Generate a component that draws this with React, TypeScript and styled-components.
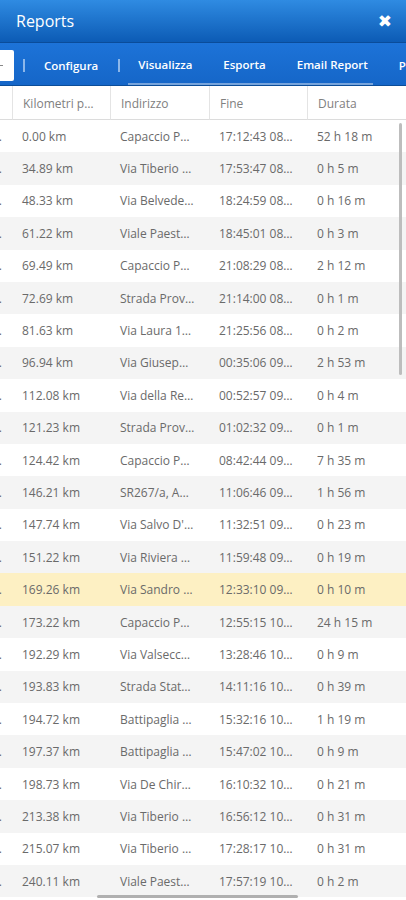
import React from 'react';
import styled, { createGlobalStyle } from 'styled-components';

/**
 * righe del report: km, indirizzo, fine, durata
 */
const rows: [string, string, string, string][] = [
  ['0.00 km', 'Capaccio P…', '17:12:43 08…', '52 h 18 m'],
  ['34.89 km', 'Via Tiberio …', '17:53:47 08…', '0 h 5 m'],
  ['48.33 km', 'Via Belvede…', '18:24:59 08…', '0 h 16 m'],
  ['61.22 km', 'Viale Paest…', '18:45:01 08…', '0 h 3 m'],
  ['69.49 km', 'Capaccio P…', '21:08:29 08…', '2 h 12 m'],
  ['72.69 km', 'Strada Prov…', '21:14:00 08…', '0 h 1 m'],
  ['81.63 km', 'Via Laura 1…', '21:25:56 08…', '0 h 2 m'],
  ['96.94 km', 'Via Giusep…', '00:35:06 09…', '2 h 53 m'],
  ['112.08 km', 'Via della Re…', '00:52:57 09…', '0 h 4 m'],
  ['121.23 km', 'Strada Prov…', '01:02:32 09…', '0 h 1 m'],
  ['124.42 km', 'Capaccio P…', '08:42:44 09…', '7 h 35 m'],
  ['146.21 km', 'SR267/a, A…', '11:06:46 09…', '1 h 56 m'],
  ['147.74 km', "Via Salvo D'…", '11:32:51 09…', '0 h 23 m'],
  ['151.22 km', 'Via Riviera …', '11:59:48 09…', '0 h 19 m'],
  ['169.26 km', 'Via Sandro …', '12:33:10 09…', '0 h 10 m'],
  ['173.22 km', 'Capaccio P…', '12:55:15 10…', '24 h 15 m'],
  ['192.29 km', 'Via Valsecc…', '13:28:46 10…', '0 h 9 m'],
  ['193.83 km', 'Strada Stat…', '14:11:16 10…', '0 h 39 m'],
  ['194.72 km', 'Battipaglia …', '15:32:16 10…', '1 h 19 m'],
  ['197.37 km', 'Battipaglia …', '15:47:02 10…', '0 h 9 m'],
  ['198.73 km', 'Via De Chir…', '16:10:32 10…', '0 h 21 m'],
  ['213.38 km', 'Via Tiberio …', '16:56:12 10…', '0 h 31 m'],
  ['215.07 km', 'Via Tiberio …', '17:28:17 10…', '0 h 31 m'],
  ['240.11 km', 'Viale Paest…', '17:57:19 10…', '0 h 2 m'],
];

const SELECTED = 14;

const Global = createGlobalStyle`
  html, body {
    margin: 0;
    padding: 0;
    background: #fff;
    overflow: hidden;
  }
  body {
    font-family: 'Open Sans', 'Liberation Sans', sans-serif;
  }
`;

const Screen = styled.div`
  position: relative;
  width: 406px;
  height: 900px;
  overflow: hidden;
  background: #fff;
`;

const TitleBar = styled.div`
  height: 42px;
  display: flex;
  align-items: center;
  justify-content: space-between;
  padding: 0 16px;
  background: linear-gradient(#2f8be2, #0c5bb5);
  color: #fff;
`;

const Title = styled.span`
  font-size: 16px;
`;

const Close = styled.span`
  font-size: 17px;
  font-weight: 700;
  font-family: 'DejaVu Sans', sans-serif;
  margin-right: -2px;
`;

const Toolbar = styled.div`
  height: 44px;
  display: flex;
  align-items: center;
  padding-top: 3px;
  background: linear-gradient(#1d73d8, #1566c8);
  border-top: 1px solid #0a4c9a;
  border-bottom: 1px solid #0b4d99;
  box-sizing: border-box;
  white-space: nowrap;
`;

const Search = styled.div`
  width: 14px;
  height: 31px;
  background: #fff;
  border-radius: 0 2px 2px 0;
  flex-shrink: 0;
  position: relative;
  &::after {
    content: '';
    position: absolute;
    left: 0;
    top: 15px;
    width: 3px;
    height: 1px;
    background: #888;
  }
`;

const Sep = styled.span<{ $left: number; $right: number }>`
  width: 2px;
  height: 13px;
  background: rgba(190, 215, 245, 0.7);
  margin: 0 ${(p) => p.$right}px 0 ${(p) => p.$left}px;
  flex-shrink: 0;
`;

const Link = styled.span`
  font-size: 11.5px;
  font-weight: 600;
  color: #fff;
  flex-shrink: 0;
`;

const Tabs = styled.div`
  display: flex;
  align-items: center;
  gap: 31px;
  height: 38px;
  padding: 0 5px 0 10px;
  margin-right: 26px;
  border-bottom: 2px solid rgba(200, 215, 235, 0.55);
  box-sizing: border-box;
  flex-shrink: 0;
`;

const Grid = styled.div`
  display: grid;
  grid-template-columns: 12px 98px 99px 98px 99px;
`;

const HeadCell = styled.div`
  height: 34px;
  display: flex;
  align-items: center;
  padding-left: 10px;
  padding-top: 1px;
  box-sizing: border-box;
  border-left: 1px solid #e4e4e4;
  border-bottom: 1px solid #dcdcdc;
  font-size: 12px;
  color: #808080;
  white-space: nowrap;
  overflow: hidden;
  &:first-child {
    border-left: none;
  }
`;

const Cell = styled.div<{ $bg: string }>`
  height: 32.4px;
  display: flex;
  align-items: center;
  padding-left: 10px;
  background: ${(p) => p.$bg};
  font-size: 12px;
  color: #6a6a6a;
  white-space: nowrap;
  overflow: hidden;
`;

const CutCell = styled(Cell)`
  padding-left: 0;
  justify-content: flex-end;
  padding-right: 10px;
`;

const VScroll = styled.div`
  position: absolute;
  left: 399px;
  top: 123px;
  width: 3px;
  height: 252px;
  border-radius: 2px;
  background: #bdbdbd;
`;

const HScroll = styled.div`
  position: absolute;
  left: 97px;
  top: 895px;
  width: 201px;
  height: 3px;
  border-radius: 2px;
  background: #b0b0b0;
`;

const rowBg = (i: number): string =>
  i === SELECTED ? '#fdf0c3' : i % 2 === 0 ? '#ffffff' : '#f4f4f4';

export default function App(): JSX.Element {
  return (
    <Screen>
      <Global />
      <TitleBar>
        <Title>Reports</Title>
        <Close>✖</Close>
      </TitleBar>
      <Toolbar>
        <Search />
        <Sep $left={9} $right={19} />
        <Link>Configura</Link>
        <Sep $left={20} $right={8} />
        <Tabs>
          <Link>Visualizza</Link>
          <Link>Esporta</Link>
          <Link>Email Report</Link>
        </Tabs>
        <Link>P</Link>
      </Toolbar>
      <Grid>
        <HeadCell />
        <HeadCell>Kilometri p…</HeadCell>
        <HeadCell>Indirizzo</HeadCell>
        <HeadCell>Fine</HeadCell>
        <HeadCell>Durata</HeadCell>
        {rows.map(([km, addr, end, dur], i) => (
          <React.Fragment key={i}>
            <CutCell $bg={rowBg(i)}>.</CutCell>
            <Cell $bg={rowBg(i)}>{km}</Cell>
            <Cell $bg={rowBg(i)}>{addr}</Cell>
            <Cell $bg={rowBg(i)}>{end}</Cell>
            <Cell $bg={rowBg(i)}>{dur}</Cell>
          </React.Fragment>
        ))}
      </Grid>
      <VScroll />
      <HScroll />
    </Screen>
  );
}
